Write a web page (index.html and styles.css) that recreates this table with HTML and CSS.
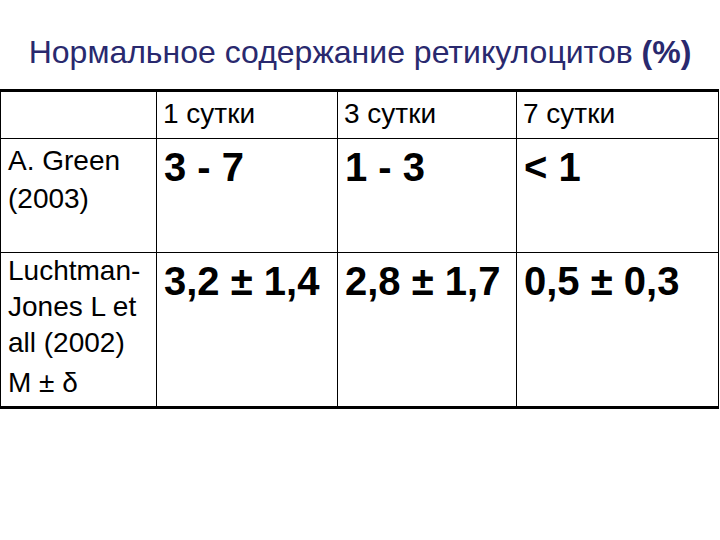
FILE: index.html
```html
<!DOCTYPE html>
<html lang="ru">
<head>
<meta charset="utf-8">
<title>Нормальное содержание ретикулоцитов</title>
<link rel="stylesheet" href="styles.css">
</head>
<body>
<h1 class="title">Нормальное содержание ретикулоцитов <b>(%)</b></h1>
<table class="grid">
  <colgroup>
    <col class="c1"><col class="c2"><col class="c3"><col class="c4">
  </colgroup>
  <tr class="head">
    <td class="label"></td>
    <td class="txt">1 сутки</td>
    <td class="txt">3 сутки</td>
    <td class="txt last">7 сутки</td>
  </tr>
  <tr class="r2">
    <td class="label">A. Green<br>(2003)</td>
    <td class="num">3 - 7</td>
    <td class="num">1 - 3</td>
    <td class="num last">&lt; 1</td>
  </tr>
  <tr class="r3">
    <td class="label">Luchtman-<br>Jones L et<br>all (2002)<div class="stat">M ± δ</div></td>
    <td class="num">3,2 ± 1,4</td>
    <td class="num">2,8 ± 1,7</td>
    <td class="num last">0,5 ± 0,3</td>
  </tr>
</table>
</body>
</html>
```
FILE: styles.css
```css
html, body {
  margin: 0;
  padding: 0;
  background: #ffffff;
}
body {
  width: 720px;
  height: 540px;
  font-family: "Liberation Sans", Arial, sans-serif;
  color: #000;
}
.title {
  margin: 0;
  height: 89px;
  box-sizing: border-box;
  padding-top: 36px;
  font-size: 32px;
  line-height: 32px;
  font-weight: normal;
  text-align: center;
  color: #29296e;
}
.title b {
  font-weight: bold;
}
.grid {
  border-collapse: separate;
  border-spacing: 0;
  table-layout: fixed;
  width: 719px;
  border-top: 3px solid #000;
  border-bottom: 3px solid #000;
  border-left: 1px solid #000;
}
.c1 { width: 156px; }
.c2 { width: 181px; }
.c3 { width: 179px; }
.c4 { width: 202px; }
.grid td {
  box-sizing: border-box;
  vertical-align: top;
  border-right: 1px solid #000;
  border-bottom: 1px solid #000;
  padding: 3px 4px 0 6px;
  font-size: 28px;
  line-height: 38px;
  overflow: hidden;
  white-space: nowrap;
}
.head td { height: 47px; }
.r2 td { height: 114px; }
.r3 td { height: 153px; border-bottom: none; }
.grid td.label {
  padding-left: 7px;
}
.r3 td.label {
  padding-top: 0;
  line-height: 36px;
}
.grid td.num {
  font-size: 40px;
  line-height: 46px;
  font-weight: bold;
  padding-top: 5px;
  padding-left: 7px;
}
.stat {
  margin-top: 4px;
}
```
